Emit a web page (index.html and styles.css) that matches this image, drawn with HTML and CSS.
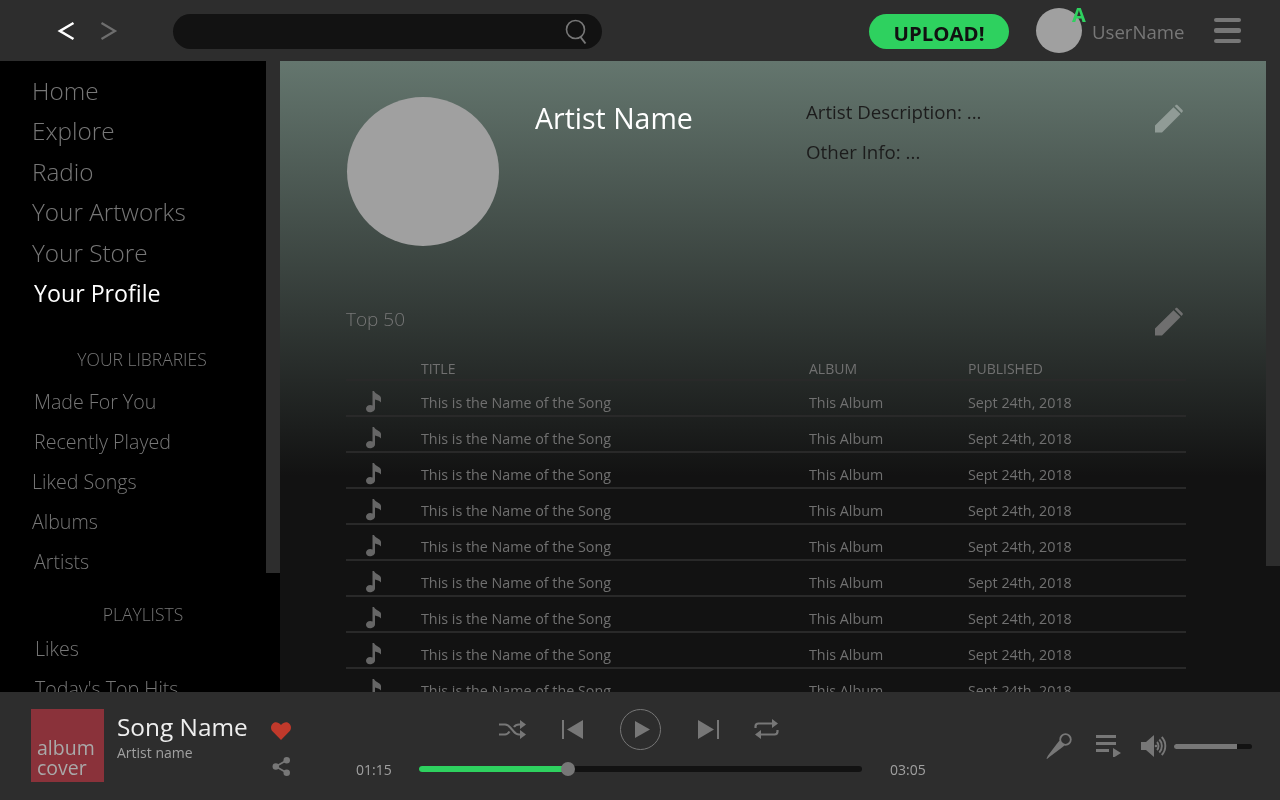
FILE: index.html
```html
<!DOCTYPE html>
<html lang="en">
<head>
<meta charset="utf-8">
<title>Artist Profile</title>
<link rel="stylesheet" href="styles.css">
</head>
<body>
<div class="app">
  <header class="topbar">
    <nav class="history">
      <svg class="chev" width="18" height="20" viewBox="0 0 18 20"><path d="M16.5 2 3 10l13.5 8" fill="none" stroke="#fff" stroke-width="2.6"/></svg>
      <svg class="chev" width="18" height="20" viewBox="0 0 18 20"><path d="M1.5 2 15 10 1.5 18" fill="none" stroke="#6e6e6e" stroke-width="2.2"/></svg>
    </nav>
    <div class="search">
      <svg width="24" height="26" viewBox="0 0 24 26"><circle cx="10.5" cy="10.5" r="9" fill="none" stroke="#777" stroke-width="1.6"/><path d="m15.5 18 5 6.5" stroke="#777" stroke-width="2" fill="none"/></svg>
    </div>
    <button class="upload"><span class="t">UPLOAD!</span></button>
    <div class="user">
      <div class="user-avatar"><span class="badge t">A</span></div>
      <span class="user-name t">UserName</span>
    </div>
    <div class="burger"><i></i><i></i><i></i></div>
  </header>

  <div class="middle">
    <aside class="sidebar">
      <div class="sidebar-inner t">
        <ul class="nav-main">
          <li>Home</li><li>Explore</li><li>Radio</li><li>Your Artworks</li><li>Your Store</li><li class="active">Your Profile</li>
        </ul>
        <h3 class="side-title libs">YOUR LIBRARIES</h3>
        <ul class="nav-sub">
          <li class="in2">Made For You</li><li class="in2">Recently Played</li><li>Liked Songs</li><li>Albums</li><li class="in2">Artists</li>
        </ul>
        <h3 class="side-title lists">PLAYLISTS</h3>
        <ul class="nav-sub nav-lists">
          <li>Likes</li><li>Today's Top Hits</li>
        </ul>
      </div>
      <div class="rail rail-side"><div class="thumb thumb-side"></div></div>
    </aside>

    <main class="content">
      <div class="content-inner">
        <section class="hero t">
          <div class="artist-photo"></div>
          <h1 class="artist-name">Artist Name</h1>
          <div class="artist-info">
            <p>Artist Description: ...</p>
            <p>Other Info: ...</p>
          </div>
          <svg class="edit light" width="30" height="30" viewBox="0 0 30 30"><path d="M1 21.5 19.500 3.200l7 6.800L8 28.500H1zM21.600 1.200c.6-.6 1.400-.6 2 0l4.800 4.700c.6.6.6 1.400 0 2l-.9 1-6.800-6.800z"/></svg>
        </section>

        <section class="chart-head t">
          <h2>Top 50</h2>
          <svg class="edit dark" width="30" height="30" viewBox="0 0 30 30"><path d="M1 21.500 19.500 3.200l7 6.800L8 28.500H1zM21.600 1.200c.6-.6 1.400-.6 2 0l4.800 4.700c.6.6.6 1.400 0 2l-.9 1-6.800-6.800z"/></svg>
        </section>

        <div class="tracks t">
          <div class="track head"><span></span><span>TITLE</span><span>ALBUM</span><span>PUBLISHED</span></div>
          <div class="track"><svg class="note" viewBox="0 0 16 22"><path d="M6.500 0H8c1 3 7 4 7 7v4.500C13.500 9.500 11 9 9 8.500v9c0 2-2.500 3.800-5 3.800-2.500 0-4-1.600-4-3.500C0 15.600 2 14 4.200 14c.8 0 1.700.2 2.300.6z"/></svg><span>This is the Name of the Song</span><span>This Album</span><span>Sept 24th, 2018</span></div>
          <div class="track"><svg class="note" viewBox="0 0 16 22"><path d="M6.500 0H8c1 3 7 4 7 7v4.500C13.500 9.500 11 9 9 8.500v9c0 2-2.500 3.800-5 3.800-2.500 0-4-1.600-4-3.500C0 15.600 2 14 4.200 14c.8 0 1.700.2 2.300.6z"/></svg><span>This is the Name of the Song</span><span>This Album</span><span>Sept 24th, 2018</span></div>
          <div class="track"><svg class="note" viewBox="0 0 16 22"><path d="M6.500 0H8c1 3 7 4 7 7v4.500C13.500 9.500 11 9 9 8.500v9c0 2-2.500 3.800-5 3.800-2.500 0-4-1.600-4-3.500C0 15.600 2 14 4.200 14c.8 0 1.700.2 2.300.6z"/></svg><span>This is the Name of the Song</span><span>This Album</span><span>Sept 24th, 2018</span></div>
          <div class="track"><svg class="note" viewBox="0 0 16 22"><path d="M6.500 0H8c1 3 7 4 7 7v4.500C13.500 9.500 11 9 9 8.500v9c0 2-2.500 3.800-5 3.800-2.500 0-4-1.600-4-3.500C0 15.600 2 14 4.200 14c.8 0 1.700.2 2.300.6z"/></svg><span>This is the Name of the Song</span><span>This Album</span><span>Sept 24th, 2018</span></div>
          <div class="track"><svg class="note" viewBox="0 0 16 22"><path d="M6.500 0H8c1 3 7 4 7 7v4.500C13.500 9.500 11 9 9 8.500v9c0 2-2.500 3.800-5 3.800-2.500 0-4-1.600-4-3.500C0 15.600 2 14 4.200 14c.8 0 1.700.2 2.300.6z"/></svg><span>This is the Name of the Song</span><span>This Album</span><span>Sept 24th, 2018</span></div>
          <div class="track"><svg class="note" viewBox="0 0 16 22"><path d="M6.500 0H8c1 3 7 4 7 7v4.500C13.500 9.500 11 9 9 8.500v9c0 2-2.500 3.800-5 3.800-2.500 0-4-1.600-4-3.500C0 15.600 2 14 4.200 14c.8 0 1.700.2 2.300.6z"/></svg><span>This is the Name of the Song</span><span>This Album</span><span>Sept 24th, 2018</span></div>
          <div class="track"><svg class="note" viewBox="0 0 16 22"><path d="M6.500 0H8c1 3 7 4 7 7v4.500C13.500 9.500 11 9 9 8.500v9c0 2-2.500 3.800-5 3.800-2.500 0-4-1.600-4-3.500C0 15.600 2 14 4.200 14c.8 0 1.700.2 2.300.6z"/></svg><span>This is the Name of the Song</span><span>This Album</span><span>Sept 24th, 2018</span></div>
          <div class="track"><svg class="note" viewBox="0 0 16 22"><path d="M6.500 0H8c1 3 7 4 7 7v4.500C13.500 9.500 11 9 9 8.500v9c0 2-2.500 3.800-5 3.800-2.500 0-4-1.600-4-3.500C0 15.600 2 14 4.200 14c.8 0 1.700.2 2.300.6z"/></svg><span>This is the Name of the Song</span><span>This Album</span><span>Sept 24th, 2018</span></div>
          <div class="track"><svg class="note" viewBox="0 0 16 22"><path d="M6.500 0H8c1 3 7 4 7 7v4.500C13.500 9.500 11 9 9 8.500v9c0 2-2.500 3.800-5 3.800-2.500 0-4-1.600-4-3.500C0 15.600 2 14 4.200 14c.8 0 1.700.2 2.300.6z"/></svg><span>This is the Name of the Song</span><span>This Album</span><span>Sept 24th, 2018</span></div>
        </div>
      </div>
      <div class="rail rail-main"><div class="thumb thumb-main"></div></div>
    </main>
  </div>

  <footer class="player">
    <div class="now t">
      <div class="cover">album cover</div>
      <div class="meta">
        <div class="song">Song Name</div>
        <div class="artist">Artist name</div>
      </div>
      <div class="actions">
        <svg width="20" height="18" viewBox="0 0 20 18"><path fill="#c0392b" d="M10 18 1.700 9.600C-.5 7.300-.5 3.900 1.400 1.900 3.400-.3 7-.4 10 3c3-3.400 6.600-3.300 8.600-1.100 1.900 2 1.900 5.400-.3 7.700z"/></svg>
        <svg class="share" width="19" height="19" viewBox="0 0 19 20"><g fill="#777"><circle cx="15" cy="3.500" r="3.400"/><circle cx="3.500" cy="10" r="3.400"/><circle cx="15" cy="16.500" r="3.400"/></g><path d="M15 3.500 3.500 10 15 16.500" fill="none" stroke="#777" stroke-width="1.800"/></svg>
      </div>
    </div>

    <div class="transport t">
      <div class="controls">
        <svg class="c-shuffle" width="27" height="19" viewBox="0 0 27 19"><g fill="none" stroke="#777" stroke-width="2.200"><path d="M0 4.500h6c4 0 5 3 7 5s3 5 7 5h3"/><path d="M0 14.500h6c2 0 3.500-1.500 4.500-3M15 7c1-1.500 2.500-2.500 5-2.500h3"/></g><path fill="#777" d="M21 0l6 4.500-6 4.500zM21 10l6 4.500-6 4.500z"/></svg>
        <svg class="c-prev" width="21" height="19" viewBox="0 0 21 19"><path fill="#777" d="M0 0h2v19H0zM21 0v19L5 9.500z"/></svg>
        <div class="play"><svg width="15" height="17" viewBox="0 0 15 17"><path fill="#777" d="M0 0l15 8.500L0 17z"/></svg></div>
        <svg class="c-next" width="21" height="19" viewBox="0 0 21 19"><path fill="#777" d="M19 0h2v19h-2zM0 0v19l16-9.500z"/></svg>
        <svg class="c-repeat" width="25" height="20" viewBox="0 0 25 20"><g fill="none" stroke="#777" stroke-width="2.200"><path d="M1.500 9V7.500c0-2 1-3 3-3H19"/><path d="M23.500 11v1.500c0 2-1 3-3 3H6"/></g><path fill="#777" d="M18 0l6 4.500L18 9zM7 11l-6 4.500L7 20z"/></svg>
      </div>
      <div class="progress-row">
        <span class="time">01:15</span>
        <div class="bar"><div class="bar-fill"></div><div class="bar-knob"></div></div>
        <span class="time time-end">03:05</span>
      </div>
    </div>

    <div class="extras">
      <svg width="26" height="26" viewBox="0 0 26 26"><circle cx="19.500" cy="6.500" r="5.300" fill="none" stroke="#777" stroke-width="1.800"/><path fill="#777" d="M13.500 7.500 18.500 12.500 16 14.500 4 23.500 1 26l-.5-.5 1.500-3L11.500 10z"/></svg>
      <svg width="25" height="22" viewBox="0 0 25 22"><path fill="#777" d="M0 0h20v3H0zM0 7h20v3H0zM0 14h13v3H0zM17 13l8 5-8 5z"/></svg>
      <svg class="speaker" width="26" height="22" viewBox="0 0 26 22"><path fill="#777" d="M0 7h5l8-7v22l-8-7H0z"/><circle cx="15" cy="11" r="1.300" fill="#777"/><g fill="none" stroke="#777" stroke-width="1.900"><path d="M16 7c2 2 2 6 0 8"/><path d="M18.300 4.500c3.400 3.400 3.400 9.600 0 13"/><path d="M20.700 2c4.800 4.800 4.800 13.200 0 18"/></g></svg>
      <div class="volume"><div class="volume-fill"></div></div>
    </div>
  </footer>
</div>
</body>
</html>
```

FILE: styles.css
```css
* { box-sizing: border-box; }
html, body { margin: 0; height: 100%; overflow: hidden; }
body { font-family: "Open Sans", "Noto Sans", sans-serif; background: #2d2d2d; }
ul { list-style: none; margin: 0; padding: 0; }
h1, h2, h3, p { margin: 0; font-weight: 400; }

.app { width: 1280px; height: 800px; display: flex; flex-direction: column; }
.t { will-change: opacity; }

/* top bar */
.topbar { height: 61px; flex: none; display: flex; align-items: center; background: #2d2d2d; }
.history { display: flex; gap: 25px; margin-left: 57px; }
.search { width: 429px; height: 35px; margin-left: 55px; margin-top: 1px; background: #121212; border-radius: 18px; display: flex; align-items: center; justify-content: flex-end; padding-right: 13px; }
.search svg { margin-top: 2px; }
.upload { width: 140px; height: 35px; margin-left: 267px; margin-top: 1px; border: 0; border-radius: 18px; background: #2ed15f; color: #111; font: 700 20.4px/38px "Open Sans", sans-serif; padding: 0; }
.upload span { display: block; }
.user { display: flex; align-items: center; margin-left: 27px; }
.user-avatar { position: relative; width: 46px; height: 45px; border-radius: 50%; background: #a0a0a0; }
.badge { position: absolute; left: 36px; top: -7px; color: #2ed15f; font-weight: 700; font-size: 20px; line-height: 27px; }
.user-name { margin-left: 10px; margin-top: 2px; color: #777; font-size: 18.600px; font-weight: 400; }
.burger { margin-left: 30px; width: 27px; display: flex; flex-direction: column; gap: 6px; }
.burger i { display: block; height: 4.500px; border-radius: 2px; background: #777; }

/* middle */
.middle { flex: 1; min-height: 0; display: flex; }
.rail { width: 14px; flex: none; }
.thumb { background: #2d2d2d; }
.rail-side { background: #000; }
.rail-main { background: #121212; }
.thumb-side { height: 512px; }
.thumb-main { height: 505px; }

.sidebar { width: 280px; flex: none; background: #000; display: flex; overflow: hidden; }
.sidebar-inner { width: 266px; flex: none; padding-top: 10px; overflow: hidden; }
.nav-main li { height: 40.400px; padding-left: 32px; color: #777; font-size: 24.300px; font-weight: 300; line-height: 40px; }
.nav-main li.active { padding-left: 34px; color: #fff; font-size: 23.200px; font-weight: 400; }
.side-title { color: #777; font-size: 17.500px; font-weight: 300; text-align: center; line-height: 24px; }
.libs { margin-top: 34px; padding-left: 18px; }
.lists { margin-top: 20px; padding-left: 20px; }
.nav-sub { margin-top: 11px; }
.nav-sub li { height: 40px; padding-left: 32px; color: #777; font-size: 19.600px; font-weight: 300; line-height: 40px; }
.nav-sub li.in2 { padding-left: 34px; }
.nav-lists { margin-top: 3px; }
.nav-lists li { padding-left: 35px; }

/* content */
.content { flex: 1; min-width: 0; display: flex; overflow: hidden; background: #121212; }
.content-inner { width: 986px; flex: none; padding: 36px 80px 0 66px; background: linear-gradient(#64766e 0, #121212 415px); overflow: hidden; }
.hero { position: relative; height: 149px; display: flex; }
.artist-photo { width: 152px; height: 149px; margin-left: 1px; border-radius: 50%; background: #a0a0a0; }
.artist-name { width: 271px; margin-left: 36px; margin-top: -1px; color: #fff; font-size: 28.500px; line-height: 44px; }
.artist-info { color: #1c1c1c; font-size: 18.700px; line-height: 30px; }
.artist-info p { margin-bottom: 10px; }
.edit { position: absolute; right: 2px; }
.edit.light { fill: #909b96; top: 7px; }
.edit.dark { fill: #6f6f6f; top: 2px; }
.chart-head { position: relative; margin-top: 59px; height: 30px; display: flex; align-items: center; }
.chart-head h2 { margin-top: -2px; color: #777; font-size: 19px; font-weight: 300; }
.tracks { margin-top: 22px; width: 840px; }
.track { display: grid; grid-template-columns: 75px 388px 159px 1fr; align-items: center; height: 36px; padding-top: 8px; border-bottom: 2px solid #292929; color: #707070; font-size: 14.300px; font-weight: 400; }
.track.head { height: 24px; padding-top: 0; font-size: 14px; }
.note { width: 16px; height: 22px; margin-left: 20px; fill: #666; }

/* player */
.player { position: relative; height: 108px; flex: none; display: flex; background: #2d2d2d; }
.now { width: 356px; flex: none; display: flex; padding: 17px 0 0 31px; }
.cover { width: 73px; height: 73px; padding: 0 0 4px 6px; background: #8a323a; color: #a9a9a9; font-size: 19.500px; font-weight: 400; line-height: 20px; display: flex; align-items: flex-end; }
.meta { width: 154px; margin-left: 13px; }
.song { color: #eee; font-size: 24.400px; line-height: 36px; }
.artist { margin-top: -1px; color: #a0a0a0; font-size: 14px; line-height: 18px; }
.actions { display: flex; flex-direction: column; align-items: flex-start; gap: 17px; padding: 13px 0 0 0; }
.share { margin-left: 1px; }
.transport { width: 570px; flex: none; }
.controls { height: 44px; margin-top: 15px; display: flex; align-items: center; padding-left: 143px; }
.c-prev { margin-left: 36px; }
.play { width: 41px; height: 41px; margin-left: 37px; border: 1px solid #777; border-radius: 50%; display: flex; align-items: center; justify-content: center; padding-left: 3px; }
.c-next { margin-left: 37px; }
.c-repeat { margin-left: 35px; }
.progress-row { display: flex; align-items: center; margin-top: 8px; }
.time { width: 63px; flex: none; margin-top: 2px; color: #a0a0a0; font-size: 14px; line-height: 18px; }
.time-end { width: 36px; }
.bar { position: relative; width: 443px; flex: none; height: 6px; margin-right: 28px; border-radius: 3px; background: #121212; }
.bar-fill { width: 149px; height: 100%; border-radius: 3px; background: #2ed15f; }
.bar-knob { position: absolute; left: 142px; top: -4px; width: 14px; height: 14px; border-radius: 50%; background: #777; }
.extras { flex: 1; display: flex; align-items: center; height: 24px; margin-top: 42px; padding-left: 120px; gap: 24px; }
.speaker { margin-left: -4px; }
.volume { width: 78px; height: 5px; margin-left: -17px; border-radius: 3px; background: #121212; overflow: hidden; }
.volume-fill { width: 63px; height: 100%; background: #777; }
```
